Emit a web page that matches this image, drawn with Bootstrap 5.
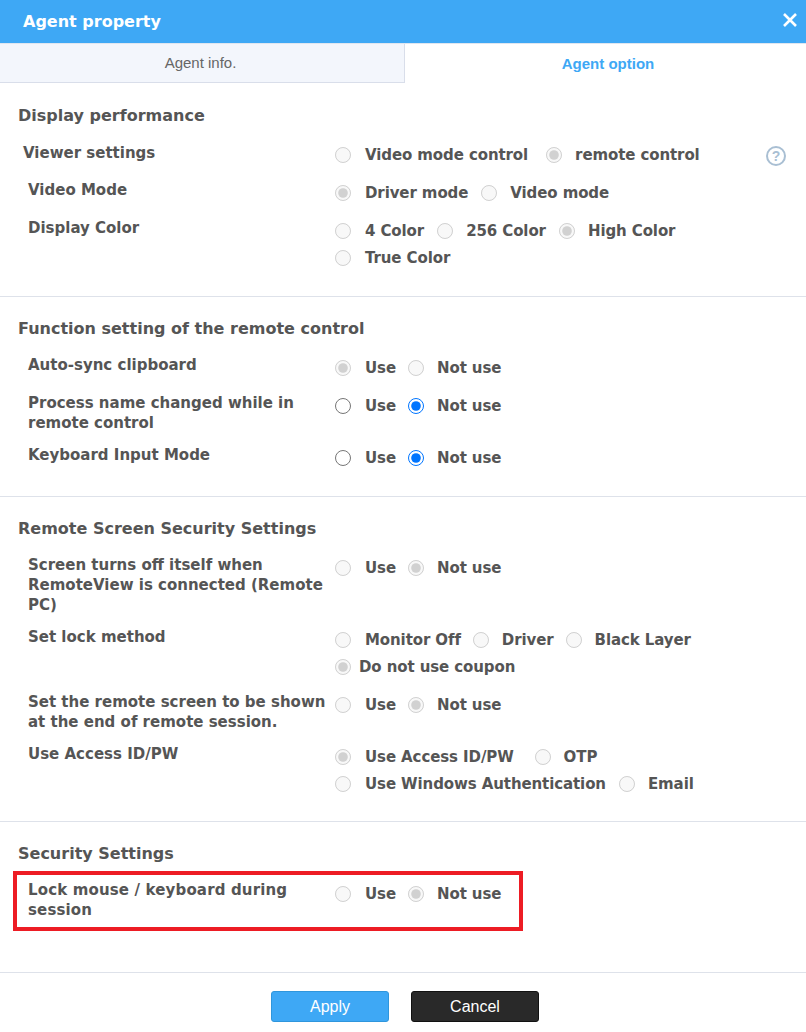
<!DOCTYPE html>
<html lang="en">
<head>
<meta charset="utf-8">
<title>Agent property</title>
<link rel="stylesheet" href="https://cdn.jsdelivr.net/npm/bootstrap@5.3.0/dist/css/bootstrap.min.css">
<style>
body{font-family:"DejaVu Sans",sans-serif;font-size:15px;color:#555;background:#fff;height:1032px;overflow:hidden}
.hdr{height:43px;background:#3ea8f5;color:#fff;padding-left:23px;font-size:16px;font-weight:700}
.tabs{height:40px;border-top:1px solid #dfe6f0;font-family:"Liberation Sans",sans-serif;font-size:15px}
.tab-off{width:405px;background:#f3f6fc;color:#666;border-right:1px solid #d9deea;border-bottom:1px solid #d9deea;padding:1px 3px 0 0}
.tab-on{color:#3ea8f5;font-weight:700;padding:1px 0 0 5px}
.sect{padding:23px 0 24px;border-bottom:1px solid #dee2ea}
.sect-n{padding-top:22px}
.sect-t{padding-bottom:23px}
.sect-h{font-size:16px;font-weight:700;line-height:20px;padding-left:18px;margin:0 0 16px;color:#555}
.opt-row{padding-left:28px;margin-bottom:11px}
.opt-row.gap-x{margin-bottom:12px}
.opt-row:last-child{margin-bottom:0}
.opt-row.ind{padding-left:23px}
.ind .lbl{width:312px;padding-top:1px}
.lbl{font-weight:700;line-height:20px;width:307px;flex:none;padding-right:4px}
.lbl.lbl-wide{letter-spacing:.15px}
.opts{flex:1;min-width:0}
.ln{height:27px;display:flex;align-items:center;font-weight:700;white-space:nowrap;letter-spacing:-.1px}
.ln input{width:16px;height:16px;margin:0 14px 2px 0;flex:none}
.ln span{margin-right:12px}
.ln span+input{margin-right:13px}
.ln span.m13{margin-right:13px}
.ln span.m18{margin-right:18px}
.ln span.m21{margin-right:21px}
.ln.tight input{margin-right:8px}
.help{margin-left:auto;margin-right:20px}
.mark-box{border:4px solid #ed1c24;width:510px;margin:7px 0 41px 13px;padding:5px 0 7px 11px}
.mark-box .ln{margin-top:1px}
.mark-box .lbl{width:307px}
.foot{border-top:1px solid #dee2ea;padding:18px 0 0 4px;gap:22px}
.bt{height:31px;font-family:"Liberation Sans",sans-serif;font-size:16px;line-height:1;padding:0;border-radius:3px;color:#fff}
.bt-a{width:118px;background:#3ea8f5;border:1px solid #2f96dc}
.bt-c{width:128px;background:#292929;border:1px solid #111}
</style>
</head>
<body>
<div class="hdr d-flex align-items-center justify-content-between">
  <span>Agent property</span>
  <svg width="16" height="16" viewBox="0 0 16 16" class="me-2 mb-1" aria-label="Close"><path d="M2 2 14 14M14 2 2 14" stroke="#fff" stroke-width="2.6" fill="none"/></svg>
</div>
<div class="tabs d-flex">
  <div class="tab-off d-flex align-items-center justify-content-center">Agent info.</div>
  <div class="tab-on flex-grow-1 d-flex align-items-center justify-content-center">Agent option</div>
</div>

<div class="sect">
  <h2 class="sect-h">Display performance</h2>
  <div class="opt-row ind d-flex">
    <div class="lbl">Viewer settings</div>
    <div class="opts">
      <div class="ln"><input type="radio" disabled><span class="m18">Video mode control</span><input type="radio" disabled checked><span>remote control</span>
        <svg class="help" width="20" height="20" viewBox="0 0 20 20"><circle cx="10" cy="10" r="9" fill="none" stroke="#a9bfd3" stroke-width="2"/><text x="10" y="15" text-anchor="middle" font-size="14" font-weight="700" fill="#a9bfd3" font-family="Liberation Sans, sans-serif">?</text></svg>
      </div>
    </div>
  </div>
  <div class="opt-row d-flex">
    <div class="lbl">Video Mode</div>
    <div class="opts"><div class="ln"><input type="radio" disabled checked><span class="m13">Driver mode</span><input type="radio" disabled><span>Video mode</span></div></div>
  </div>
  <div class="opt-row d-flex">
    <div class="lbl">Display Color</div>
    <div class="opts">
      <div class="ln"><input type="radio" disabled><span class="m13">4 Color</span><input type="radio" disabled><span class="m13">256 Color</span><input type="radio" disabled checked><span>High Color</span></div>
      <div class="ln"><input type="radio" disabled><span>True Color</span></div>
    </div>
  </div>
</div>

<div class="sect sect-n">
  <h2 class="sect-h">Function setting of the remote control</h2>
  <div class="opt-row d-flex">
    <div class="lbl">Auto-sync clipboard</div>
    <div class="opts"><div class="ln"><input type="radio" disabled checked><span>Use</span><input type="radio" disabled><span>Not use</span></div></div>
  </div>
  <div class="opt-row gap-x d-flex">
    <div class="lbl">Process name changed while in remote control</div>
    <div class="opts"><div class="ln"><input type="radio" name="p"><span>Use</span><input type="radio" name="p" checked><span>Not use</span></div></div>
  </div>
  <div class="opt-row d-flex">
    <div class="lbl">Keyboard Input Mode</div>
    <div class="opts"><div class="ln"><input type="radio" name="k"><span>Use</span><input type="radio" name="k" checked><span>Not use</span></div></div>
  </div>
</div>

<div class="sect sect-n sect-t">
  <h2 class="sect-h">Remote Screen Security Settings</h2>
  <div class="opt-row gap-x d-flex">
    <div class="lbl">Screen turns off itself when RemoteView is connected (Remote PC)</div>
    <div class="opts"><div class="ln"><input type="radio" disabled><span>Use</span><input type="radio" disabled checked><span>Not use</span></div></div>
  </div>
  <div class="opt-row d-flex">
    <div class="lbl">Set lock method</div>
    <div class="opts">
      <div class="ln"><input type="radio" disabled><span>Monitor Off</span><input type="radio" disabled><span>Driver</span><input type="radio" disabled><span>Black Layer</span></div>
      <div class="ln tight"><input type="radio" disabled checked><span>Do not use coupon</span></div>
    </div>
  </div>
  <div class="opt-row gap-x d-flex">
    <div class="lbl">Set the remote screen to be shown at the end of remote session.</div>
    <div class="opts"><div class="ln"><input type="radio" disabled><span>Use</span><input type="radio" disabled checked><span>Not use</span></div></div>
  </div>
  <div class="opt-row d-flex">
    <div class="lbl">Use Access ID/PW</div>
    <div class="opts">
      <div class="ln"><input type="radio" disabled checked><span class="m21">Use Access ID/PW</span><input type="radio" disabled><span>OTP</span></div>
      <div class="ln"><input type="radio" disabled><span class="m13">Use Windows Authentication</span><input type="radio" disabled><span>Email</span></div>
    </div>
  </div>
</div>

<div class="sect-n pb-0">
  <h2 class="sect-h mb-0">Security Settings</h2>
  <div class="mark-box d-flex">
    <div class="lbl lbl-wide">Lock mouse / keyboard during session</div>
    <div class="opts"><div class="ln"><input type="radio" disabled><span>Use</span><input type="radio" disabled checked><span>Not use</span></div></div>
  </div>
</div>

<div class="foot d-flex justify-content-center">
  <button type="button" class="btn bt bt-a">Apply</button>
  <button type="button" class="btn bt bt-c">Cancel</button>
</div>
<script src="https://cdn.jsdelivr.net/npm/bootstrap@5.3.0/dist/js/bootstrap.bundle.min.js"></script>
</body>
</html>
